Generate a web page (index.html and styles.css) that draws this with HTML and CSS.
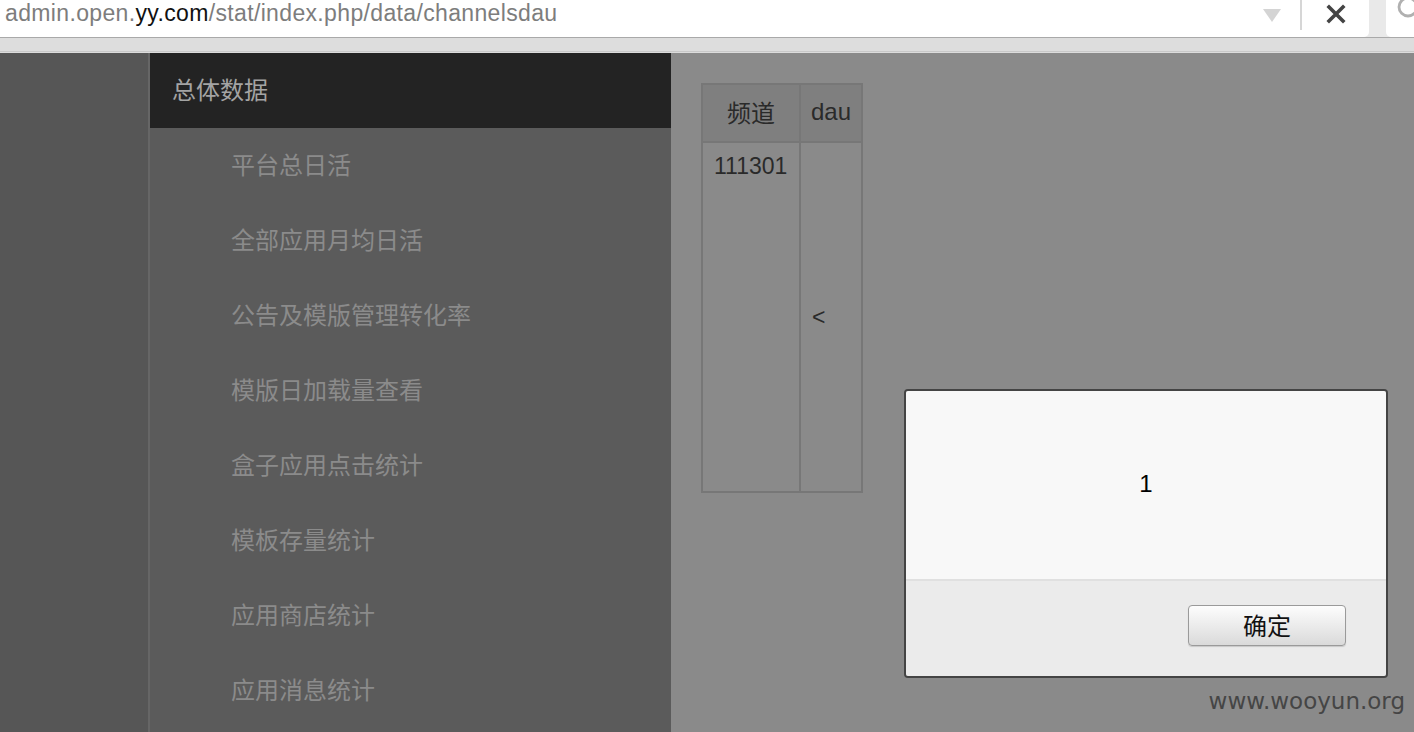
FILE: index.html
```html
<!DOCTYPE html>
<html lang="zh-CN">
<head>
<meta charset="utf-8">
<title>channelsdau</title>
<link rel="stylesheet" href="styles.css">
</head>
<body>
<header class="toolbar">
  <div class="fields">
    <div class="url-field">
      <span class="url"><span class="dim">admin.open.</span><span class="host">yy.com</span><span class="dim">/stat/index.php/data/channelsdau</span></span>
      <span class="drop"></span>
      <span class="divider"></span>
      <svg class="close" width="20" height="20" viewBox="0 0 20 20"><path d="M3 3 L17 17 M17 3 L3 17" stroke="#444" stroke-width="3.6" stroke-linecap="square"/></svg>
    </div>
    <div class="search-field">
      <svg class="glass" width="30" height="24" viewBox="0 0 30 24"><circle cx="22" cy="8" r="9" fill="none" stroke="#b0b0b0" stroke-width="2.8"/></svg>
    </div>
  </div>
  <div class="band"></div>
</header>
<div class="page">
  <div class="gutter"></div>
  <nav class="sidebar">
    <div class="side-head">总体数据</div>
    <ul class="side-list">
      <li>平台总日活</li>
      <li>全部应用月均日活</li>
      <li>公告及模版管理转化率</li>
      <li>模版日加载量查看</li>
      <li>盒子应用点击统计</li>
      <li>模板存量统计</li>
      <li>应用商店统计</li>
      <li>应用消息统计</li>
    </ul>
  </nav>
  <main class="main">
    <table class="data">
      <thead>
        <tr><th class="c1">频道</th><th class="c2">dau</th></tr>
      </thead>
      <tbody>
        <tr><td class="c1 top">111301</td><td class="c2 mid">&lt;</td></tr>
      </tbody>
    </table>
  </main>
</div>
<div class="dialog">
  <div class="dialog-body">1</div>
  <div class="dialog-foot"><button class="ok">确定</button></div>
</div>
<div class="watermark">www.wooyun.org</div>
</body>
</html>
```
FILE: styles.css
```css
* { box-sizing: border-box; }
html, body { margin: 0; padding: 0; }
body {
  width: 1414px;
  height: 732px;
  overflow: hidden;
  font-family: "Liberation Sans", "Noto Sans CJK SC", sans-serif;
  background: #8a8a8a;
  position: relative;
}
.toolbar { height: 53px; background: #dcdcdc; }
.fields {
  height: 38px;
  background: #e9e9e9;
  display: flex;
  border-bottom: 1px solid #a9a9a9;
}
.url-field {
  width: 1369px;
  height: 37px;
  background: #fff;
  border-bottom-right-radius: 5px;
  display: flex;
  align-items: center;
  position: relative;
}
.url {
  font-size: 23px;
  letter-spacing: 0.35px;
  padding-left: 5px;
  margin-top: -10px;
  white-space: nowrap;
  flex: 1;
}
.url .dim { color: #7d7d7d; }
.url .host { color: #111; }
.drop {
  width: 0; height: 0;
  border-left: 9px solid transparent;
  border-right: 9px solid transparent;
  border-top: 13px solid #d4d4d4;
  margin-right: 19px;
  margin-top: -6px;
}
.divider { width: 2px; height: 30px; background: #d6d6d6; align-self: flex-start; margin-right: 24px; }
.close { margin-right: 23px; margin-top: -9px; }
.search-field {
  margin-left: 17px;
  flex: 1;
  height: 37px;
  background: #fff;
  border-bottom-left-radius: 5px;
  overflow: hidden;
}
.glass { display: block; margin-top: -1px; }
.band { height: 14px; border-bottom: 1px solid #c8c8c8; background: #dddddd; }

.page { display: flex; height: 679px; }
.gutter { width: 150px; background: #565656; border-right: 2px solid #666; flex: none; }
.sidebar { width: 521px; background: #5b5b5b; flex: none; }
.side-head {
  height: 75px;
  background: #232323;
  color: #a4a4a4;
  font-size: 24px;
  line-height: 75px;
  padding-left: 22px;
}
.side-list { list-style: none; margin: 0; padding: 0; }
.side-list li {
  height: 75px;
  line-height: 75px;
  padding-left: 81px;
  font-size: 24px;
  color: #8b8b8b;
}
.main { flex: 1; padding: 30px 0 0 30px; background: #8a8a8a; }
.data {
  border-collapse: collapse;
  border: 2px solid #777;
  height: 410px;
  font-size: 23px;
  color: #2a2a2a;
}
.data th, .data td { border: 2px solid #777; padding: 0; }
.data th { background: #7f7f7f; font-weight: normal; height: 58px; text-align: center; padding-bottom: 3px; }
.data th.c1 { font-size: 24px; }
.data th.c2 { font-size: 24px; }
.data .c1 { width: 98px; }
.data .c2 { width: 62px; }
.data td.top { vertical-align: top; padding: 10px 0 0 11px; text-align: left; }
.data td.mid { vertical-align: middle; padding-left: 11px; text-align: left; }

.dialog {
  position: absolute;
  left: 904px;
  top: 389px;
  width: 484px;
  height: 289px;
  border: 2px solid #444;
  border-radius: 4px;
  overflow: hidden;
  display: flex;
  flex-direction: column;
}
.dialog-body {
  height: 190px;
  background: #f8f8f8;
  border-bottom: 2px solid #e0e0e0;
  font-size: 24px;
  color: #000;
  display: flex;
  align-items: center;
  justify-content: center;
  padding-bottom: 2px;
}
.dialog-foot {
  flex: 1;
  background: #ebebeb;
  display: flex;
  justify-content: flex-end;
  align-items: flex-start;
  padding: 24px 40px 0 0;
}
.ok {
  width: 158px;
  height: 41px;
  border: 1.5px solid #9a9a9a;
  border-radius: 4px;
  background: linear-gradient(#fdfdfd, #dadada);
  font-family: "Liberation Sans", "Noto Sans CJK SC", sans-serif;
  font-size: 24px;
  color: #111;
  padding: 0 0 3px 0;
  box-shadow: 0 1px 1px rgba(0,0,0,0.15);
}
.watermark {
  position: absolute;
  right: 9px;
  top: 688px;
  font-family: "DejaVu Sans", sans-serif;
  font-size: 23px;
  color: #454545;
}
```
